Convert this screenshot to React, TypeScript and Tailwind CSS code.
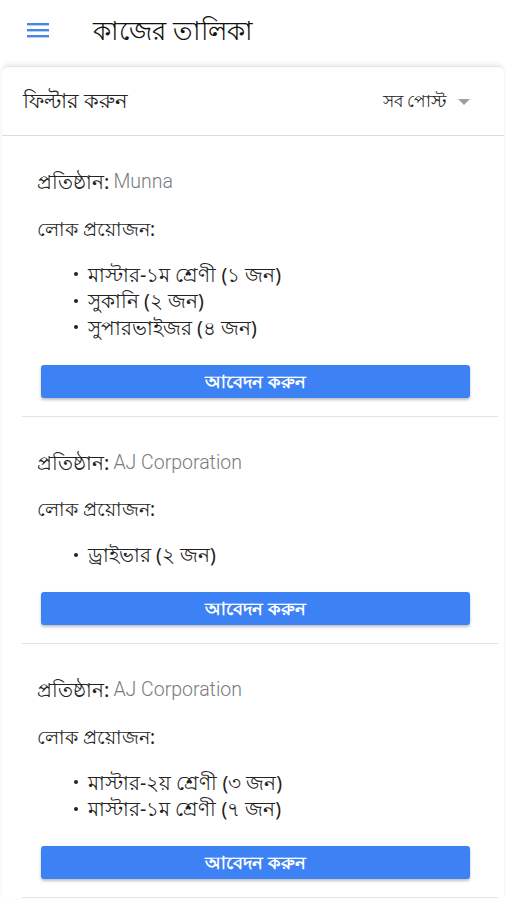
import React from "react";

type Job = {
  company: string;
  posts: string[];
};

const jobs: Job[] = [
  {
    company: "Munna",
    posts: ["মাস্টার-১ম শ্রেণী (১ জন)", "সুকানি (২ জন)", "সুপারভাইজর (৪ জন)"],
  },
  {
    company: "AJ Corporation",
    posts: ["ড্রাইভার (২ জন)"],
  },
  {
    company: "AJ Corporation",
    posts: ["মাস্টার-২য় শ্রেণী (৩ জন)", "মাস্টার-১ম শ্রেণী (৭ জন)"],
  },
];

const JobCard: React.FC<Job> = ({ company, posts }) => {
  return (
    <div className="ml-[20px] mr-[6px] border-b border-[#e2e2e2] pt-[34px] pb-[18px]">
      <div className="pl-[15px] h-[24px] flex items-center text-[20px] text-[#222]">
        <span>প্রতিষ্ঠান:</span>
        <span className="ml-[4px] text-[19.5px] text-[#7a7a7a] font-['Roboto'] font-light">{company}</span>
      </div>
      <div className="pl-[15px] mt-[23px] h-[24px] flex items-center text-[19px] text-[#222]">
        লোক প্রয়োজন:
      </div>
      <ul className="mt-[20px] pl-[52px] flex flex-col">
        {posts.map((p, i) => (
          <li key={i} className="h-[26.5px] flex items-center text-[19.5px] text-[#222]">
            <span className="w-[4px] h-[4px] rounded-full bg-[#222] mr-[10px]" />
            {p}
          </li>
        ))}
      </ul>
      <button className="mt-[24px] ml-[19px] w-[429px] h-[33px] rounded-[3px] bg-[#3d82f5] text-white text-[17.5px] font-semibold shadow-[0_2px_3px_rgba(0,0,0,0.25)] flex items-center justify-center">
        আবেদন করুন
      </button>
    </div>
  );
};

export default function App() {
  return (
    <div className="w-[506px] h-[900px] bg-white overflow-hidden font-['Noto_Sans','Roboto',sans-serif]">
      <header className="h-[66px] flex items-center">
        <svg width="22" height="15" viewBox="0 0 22 15" className="ml-[27px] mb-[5px]">
          <rect x="0" y="0" width="22" height="2.4" fill="#4a86e8" />
          <rect x="0" y="6" width="22" height="2.4" fill="#4a86e8" />
          <rect x="0" y="12" width="22" height="2.4" fill="#4a86e8" />
        </svg>
        <h1 className="ml-[44px] mb-[6px] text-[26px] text-[#111]">কাজের তালিকা</h1>
      </header>
      <div className="mx-[2px] rounded-t-[6px] border-t border-[#e4e4e4] shadow-[0_-2px_4px_rgba(0,0,0,0.08)]">
        <div className="h-[69px] border-b border-[#dcdcdc] px-[21px] flex items-center justify-between">
          <span className="text-[21px] text-[#222]">ফিল্টার করুন</span>
          <div className="flex items-center">
            <span className="text-[17px] text-[#222]">সব পোস্ট</span>
            <span className="ml-[12px] mr-[13px] mt-[2px] w-0 h-0 border-l-[6px] border-r-[6px] border-t-[6px] border-l-transparent border-r-transparent border-t-[#a0a0a0]" />
          </div>
        </div>
        {jobs.map((j, i) => (
          <JobCard key={i} {...j} />
        ))}
      </div>
    </div>
  );
}
